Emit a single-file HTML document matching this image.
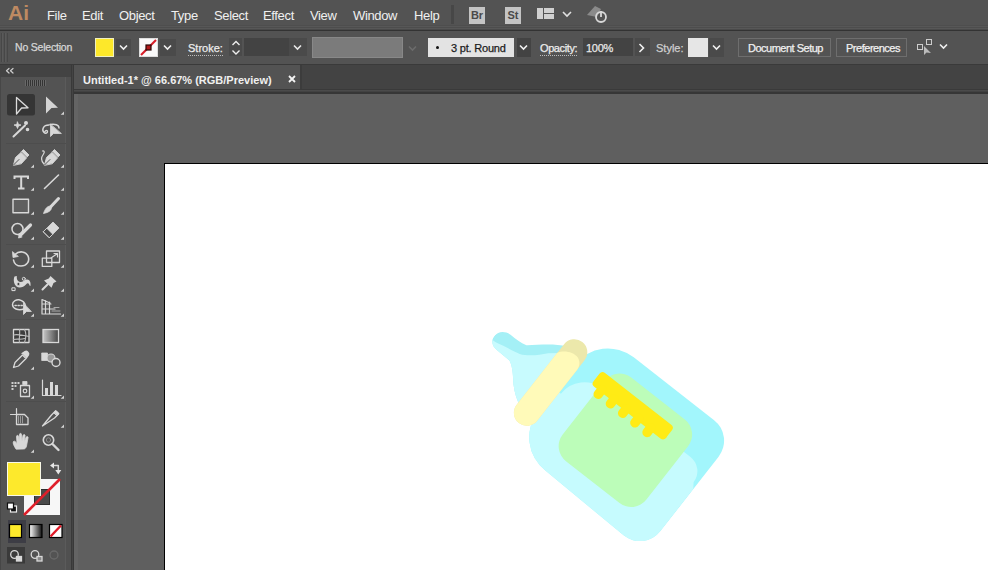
<!DOCTYPE html>
<html><head><meta charset="utf-8">
<style>
*{margin:0;padding:0;box-sizing:border-box}
html,body{width:988px;height:570px;overflow:hidden;background:#5f5f5f;font-family:"Liberation Sans",sans-serif;position:relative}
.a{position:absolute}
#menubar{left:0;top:0;width:988px;height:25px;background:#535353}
#mband{left:0;top:25px;width:988px;height:5px;background:linear-gradient(#4e4e4e 0 1px,#575757 1px 2px,#4d4d4d 2px 3px,#575757 3px 4px,#4a4a4a 4px 5px)}
#mline{left:0;top:30px;width:988px;height:1px;background:#333}
#ctrl{left:0;top:31px;width:988px;height:33px;background:#535353}
#cline{left:0;top:64px;width:988px;height:1px;background:#3a3a3a}
.mi{position:absolute;top:9px;font-size:13px;color:#f0f0f0;line-height:13px;white-space:nowrap;letter-spacing:-0.35px}
.lbl{position:absolute;top:43px;font-size:11px;color:#ececec;-webkit-text-stroke:0.25px currentColor;line-height:11px;white-space:nowrap}
.ul{border-bottom:1px dotted #bdbdbd;padding-bottom:1px}
.box{position:absolute}
#tools{left:0;top:65px;width:71px;height:505px;background:#535353}
#tline{left:71px;top:65px;width:3px;height:505px;background:linear-gradient(90deg,#393939 0 1px,#444 1px 2px,#393939 2px 3px)}
#thead{left:0;top:65px;width:71px;height:12px;background:#434343}
#tabrow{left:74px;top:65px;width:914px;height:28px;background:#434343}
#tab{left:74px;top:65px;width:228px;height:24px;background:#535353;border-right:2px solid #3c3c3c}
#tabline{left:74px;top:89px;width:914px;height:5px;background:linear-gradient(#3a3a3a 0 1px,#4a4a4a 1px 2px,#424242 2px 3px,#363636 3px 5px)}
#canvas{left:74px;top:94px;width:914px;height:476px;background:#5f5f5f}
#artboard{left:165px;top:164px;width:823px;height:406px;background:#fff}
#abshadow{left:164px;top:163px;width:824px;height:407px;background:#000}
svg{position:absolute;overflow:visible}
</style></head><body>
<div class="a" id="menubar">
  <div class="a" style="left:8px;top:2px;font-size:21px;line-height:21px;color:#be8a62;font-weight:bold">Ai</div>
  <span class="mi" style="left:47px">File</span>
  <span class="mi" style="left:82px">Edit</span>
  <span class="mi" style="left:119px">Object</span>
  <span class="mi" style="left:171px">Type</span>
  <span class="mi" style="left:214px">Select</span>
  <span class="mi" style="left:263px">Effect</span>
  <span class="mi" style="left:310px">View</span>
  <span class="mi" style="left:353px">Window</span>
  <span class="mi" style="left:414px">Help</span>
  <div class="box" style="left:451px;top:5px;width:3px;height:19px;background:#474747"></div>
  <div class="box" style="left:469px;top:7px;width:16px;height:17px;background:#c4c4c4;color:#4a4a4a;font-size:11px;font-weight:bold;line-height:17px;text-align:center">Br</div>
  <div class="box" style="left:505px;top:7px;width:16px;height:17px;background:#c4c4c4;color:#4a4a4a;font-size:11px;font-weight:bold;line-height:17px;text-align:center">St</div>
  <div class="box" style="left:537px;top:8px;width:6px;height:11px;background:#d0d0d0"></div>
  <div class="box" style="left:544px;top:8px;width:10px;height:5px;background:#d0d0d0"></div>
  <div class="box" style="left:544px;top:14px;width:10px;height:5px;background:#d0d0d0"></div>
  <svg style="left:562px;top:11px" width="10" height="6"><path d="M1 1 L5 5 L9 1" stroke="#e0e0e0" stroke-width="1.6" fill="none"/></svg>
  <svg style="left:585px;top:3px" width="25" height="22"><path d="M2 12 L10 3 L16 6 L12 14 Z" fill="#8a8a8a"/><circle cx="16" cy="14" r="5" stroke="#d8d8d8" stroke-width="1.8" fill="none"/><path d="M16 8 V14" stroke="#d8d8d8" stroke-width="1.8"/></svg>
</div>
<div class="a" id="mband"></div>
<div class="a" id="mline"></div>
<div class="a" id="ctrl">
</div>
<div class="a" id="cline"></div>
<!-- control bar content -->
<div class="box" style="left:1px;top:33px;width:7px;height:29px;background:repeating-linear-gradient(90deg,#474747 0 1px,#5a5a5a 1px 2px,#535353 2px 3px)"></div>
<span class="lbl" style="left:15px;top:42px;font-size:10.5px;letter-spacing:-0.2px;color:#d6d6d6">No Selection</span>
<div class="box" style="left:95px;top:38px;width:19px;height:19px;background:#fde82a;border:1px solid #f0f0c0"></div>
<div class="box" style="left:116px;top:39px;width:15px;height:17px;background:#4a4a4a"></div>
<svg style="left:119px;top:44px" width="10" height="7"><path d="M1 1.5 L4.5 5 L8 1.5" stroke="#f0f0f0" stroke-width="1.6" fill="none"/></svg>
<div class="box" style="left:139px;top:38px;width:19px;height:19px;background:#fafafa;border:1px solid #ddd"></div>
<svg style="left:139px;top:38px" width="19" height="19"><path d="M2 17 L17 2" stroke="#d81f2a" stroke-width="2.2"/><rect x="7" y="7" width="5" height="5" fill="#b01818" stroke="#2a0606" stroke-width="1.2"/></svg>
<div class="box" style="left:160px;top:39px;width:16px;height:17px;background:#4a4a4a"></div>
<svg style="left:163px;top:44px" width="10" height="7"><path d="M1 1.5 L4.5 5 L8 1.5" stroke="#f0f0f0" stroke-width="1.6" fill="none"/></svg>
<span class="lbl ul" style="left:188px">Stroke:</span>
<div class="box" style="left:229px;top:38px;width:13px;height:18px;background:#4a4a4a"></div>
<svg style="left:231px;top:40px" width="10" height="16"><path d="M1.5 5 L5 1.5 L8.5 5 M1.5 10.5 L5 14 L8.5 10.5" stroke="#eee" stroke-width="1.4" fill="none"/></svg>
<div class="box" style="left:244px;top:38px;width:45px;height:18px;background:#434343"></div>
<div class="box" style="left:289px;top:38px;width:18px;height:18px;background:#4a4a4a"></div>
<svg style="left:293px;top:44px" width="10" height="7"><path d="M1 1.5 L4.5 5 L8 1.5" stroke="#e8e8e8" stroke-width="1.6" fill="none"/></svg>
<div class="box" style="left:312px;top:37px;width:91px;height:21px;background:#7b7b7b;border:1px solid #888"></div>
<svg style="left:408px;top:45px" width="10" height="7"><path d="M1 1.5 L4.5 5 L8 1.5" stroke="#6c6c6c" stroke-width="1.6" fill="none"/></svg>
<div class="box" style="left:428px;top:38px;width:86px;height:19px;background:#e3e3e3"></div>
<div class="box" style="left:436px;top:46px;width:3px;height:3px;background:#111;border-radius:50%"></div>
<span class="lbl" style="left:451px;color:#1c1c1c;letter-spacing:-0.2px">3 pt. Round</span>
<div class="box" style="left:517px;top:38px;width:14px;height:19px;background:#434343"></div>
<svg style="left:519px;top:44px" width="10" height="7"><path d="M1 1.5 L4.5 5 L8 1.5" stroke="#f0f0f0" stroke-width="1.6" fill="none"/></svg>
<span class="lbl ul" style="left:540px;letter-spacing:-0.4px">Opacity:</span>
<div class="box" style="left:583px;top:38px;width:50px;height:18px;background:#434343"></div>
<span class="lbl" style="left:586px;color:#e8e8e8;letter-spacing:-0.3px">100%</span>
<div class="box" style="left:635px;top:38px;width:15px;height:18px;background:#4a4a4a"></div>
<svg style="left:638px;top:43px" width="8" height="10"><path d="M1.5 1 L5.5 5 L1.5 9" stroke="#f0f0f0" stroke-width="1.6" fill="none"/></svg>
<span class="lbl" style="left:656px;color:#cfcfcf">Style:</span>
<div class="box" style="left:688px;top:38px;width:20px;height:19px;background:#e6e6e6"></div>
<div class="box" style="left:709px;top:38px;width:15px;height:19px;background:#4a4a4a"></div>
<svg style="left:712px;top:44px" width="10" height="7"><path d="M1 1.5 L4.5 5 L8 1.5" stroke="#f0f0f0" stroke-width="1.6" fill="none"/></svg>
<div class="box" style="left:738px;top:38px;width:93px;height:19px;border:1px solid #6e6e6e;background:#535353"></div>
<span class="lbl" style="left:748px;color:#f0f0f0;letter-spacing:-0.5px">Document Setup</span>
<div class="box" style="left:836px;top:38px;width:71px;height:19px;border:1px solid #6e6e6e;background:#535353"></div>
<span class="lbl" style="left:846px;color:#f0f0f0;letter-spacing:-0.48px">Preferences</span>
<svg style="left:916px;top:38px" width="18" height="18"><rect x="1.5" y="6.5" width="5" height="5" stroke="#ccc" fill="none"/><rect x="10.5" y="1.5" width="5" height="5" stroke="#ccc" fill="none"/><path d="M8 8 L8 17 L10.5 14.5 L15 15 Z" fill="#bbb"/></svg>
<svg style="left:939px;top:43px" width="10" height="7"><path d="M1 1.5 L4.5 5 L8 1.5" stroke="#f0f0f0" stroke-width="1.6" fill="none"/></svg>

<div class="a" id="tools"></div>
<div class="a" id="thead"></div>
<div class="a" style="left:65px;top:77px;width:1px;height:493px;background:#5b5b5b"></div>
<div class="a" style="left:66px;top:77px;width:5px;height:493px;background:#505050"></div>
<div class="a" style="left:0;top:77px;width:1px;height:493px;background:#474747"></div>
<div class="a" id="tline"></div>
<div class="a" style="left:0;top:0;width:74px;height:570px">
<svg style="left:0;top:0" width="74" height="570" viewBox="0 0 74 570">
<g fill="none" stroke="#d8d8d8" stroke-width="1.3" stroke-linejoin="round" stroke-linecap="round">
<!-- header arrows -->
<path d="M9 68.5 L6.5 70.8 L9 73 M13 68.5 L10.5 70.8 L13 73" stroke="#cfcfcf" stroke-width="1.2"/>
</g>
<!-- gripper -->
<g stroke="#343434" stroke-width="1">
<path d="M26.5 80 V86 M28.5 80 V86 M30.5 80 V86 M32.5 80 V86 M34.5 80 V86 M36.5 80 V86 M38.5 80 V86 M40.5 80 V86 M42.5 80 V86 M44.5 80 V86"/>
</g>
<g stroke="#686868" stroke-width="1">
<path d="M25.5 80 V86 M27.5 80 V86 M29.5 80 V86 M31.5 80 V86 M33.5 80 V86 M35.5 80 V86 M37.5 80 V86 M39.5 80 V86 M41.5 80 V86 M43.5 80 V86 M45.5 80 V86"/>
</g>
<rect x="7" y="94" width="28" height="21.5" rx="2.5" fill="#353535"/>
<g fill="none" stroke="#dcdcdc" stroke-width="1.3" stroke-linejoin="round" stroke-linecap="round">
<!-- selection -->
<path d="M16.5 97.5 L28 107.8 L21.6 108 L16.5 114 Z" fill="#353535"/>
</g>
<g fill="#d4d4d4">
<path d="M46 96.5 L58 107.8 L51.5 108 L46 113.5 Z"/>
<!-- small triangles -->
<path d="M64 111.5 L64 114.8 L60.7 114.8 Z"/>
<path d="M34 164.5 L34 167.8 L30.7 167.8 Z"/>
<path d="M64 164.5 L64 167.8 L60.7 167.8 Z"/>
<path d="M34 187.5 L34 190.8 L30.7 190.8 Z"/>
<path d="M64 187.5 L64 190.8 L60.7 190.8 Z"/>
<path d="M34 211.5 L34 214.8 L30.7 214.8 Z"/>
<path d="M64 211.5 L64 214.8 L60.7 214.8 Z"/>
<path d="M34 236.5 L34 239.8 L30.7 239.8 Z"/>
<path d="M64 236.5 L64 239.8 L60.7 239.8 Z"/>
<path d="M34 264.5 L34 267.8 L30.7 267.8 Z"/>
<path d="M64 264.5 L64 267.8 L60.7 267.8 Z"/>
<path d="M34 288.5 L34 291.8 L30.7 291.8 Z"/>
<path d="M64 288.5 L64 291.8 L60.7 291.8 Z"/>
<path d="M34 313.5 L34 316.8 L30.7 316.8 Z"/>
<path d="M64 313.5 L64 316.8 L60.7 316.8 Z"/>
<path d="M34 366.5 L34 369.8 L30.7 369.8 Z"/>
<path d="M34 395.5 L34 398.8 L30.7 398.8 Z"/>
<path d="M64 395.5 L64 398.8 L60.7 398.8 Z"/>
<path d="M64 424.5 L64 427.8 L60.7 427.8 Z"/>
<path d="M34 449.5 L34 452.8 L30.7 452.8 Z"/>
</g>
<g fill="none" stroke="#d8d8d8" stroke-width="1.4" stroke-linejoin="round" stroke-linecap="round">
<!-- magic wand -->
<path d="M13.5 136.5 L25 125.5" stroke-width="2"/>
<path d="M17.5 122 L18.5 124.5 L21 125 L18.5 126 L17.5 128.5 L16.5 126 L14 125 L16.5 124.5 Z" fill="#d8d8d8" stroke-width="0.8"/>
<circle cx="26" cy="123" r="1.3" fill="#d8d8d8"/>
<circle cx="27.5" cy="129.5" r="1.1" fill="#d8d8d8"/>
<!-- lasso -->
<path d="M49 125 C43 125 41.5 130 44 132.5 C45.5 134 47.5 133 47.5 131.5 C47.5 130 45.5 130 45 131.5" />
<path d="M50 124.5 C55 123.5 59 125 59 128"/>
<path d="M50.5 124.5 L50.5 136.5 L53.5 133.5 L61 133.5 Z" fill="#d8d8d8" stroke-width="0.8"/>
<!-- pen -->
<path d="M13.5 165 L15.5 157.5 L21 152.5 L26.5 158 L21.5 163.5 Z" fill="#d8d8d8" stroke-width="0.9"/>
<path d="M21.5 151.5 L23.5 149.5 L29 155 L27 157 Z" fill="#d8d8d8" stroke-width="0.9"/>
<path d="M13.5 165 L19 159.5" stroke="#555" stroke-width="1"/>
<!-- curvature pen -->
<path d="M44 164 C40 160 42 156 43.5 154 C45 152 44 150.5 42.5 151" stroke-width="1.2"/>
<path d="M44.5 165 L46.5 157.5 L52 152.5 L57.5 158 L52.5 163.5 Z" fill="#d8d8d8" stroke-width="0.9"/>
<path d="M52.5 151.5 L54.5 149.5 L60 155 L58 157 Z" fill="#d8d8d8" stroke-width="0.9"/>
<path d="M44.5 165 L50 159.5" stroke="#555" stroke-width="1"/>
<!-- type -->
<path d="M14.5 179 V176.5 H28 V179 M21.2 176.5 V188.5 M18 188.5 H24.5" stroke-width="2" stroke-linecap="butt" stroke-linejoin="miter"/>
<!-- line -->
<path d="M44.5 188.5 L58.5 175" stroke-width="1.6"/>
<!-- rect -->
<rect x="13" y="199.3" width="15.5" height="13.4" fill="#5f5f5f" stroke-width="1.4"/>
<!-- brush -->
<path d="M58.5 198.5 L51 206.5" stroke-width="3"/>
<path d="M50.5 206 C47 206 45 209 43.5 213.5 C48 212.5 51.5 211 51.5 207.5 Z" fill="#d8d8d8" stroke-width="0.8"/>
<!-- shaper -->
<circle cx="17.5" cy="229" r="5.5" stroke-width="1.5"/>
<path d="M30.5 225 L20 235.5" stroke-width="3.2"/>
<path d="M19.5 234 L18.5 238 L22 237" fill="#d8d8d8" stroke-width="0.8"/>
<!-- eraser -->
<path d="M43.5 231.5 L53 222 L59 228 L49.5 237.5 Z" fill="#d8d8d8" stroke-width="0.8"/>
<path d="M43.5 231.5 L46.8 228.2 L52.8 234.2 L49.5 237.5 Z" fill="#4a4a4a" stroke="#d8d8d8" stroke-width="0.9"/>
<!-- rotate -->
<path d="M15 254.5 C19 250.5 26 251 28.2 256.5 C30 261.5 26.5 266 21 266 C17 266 14 263.5 13.5 260" stroke-width="1.6"/>
<path d="M12.5 252 L13 257.5 L18 256.5 Z" fill="#d8d8d8" stroke-width="0.8"/>
<!-- scale -->
<rect x="46.5" y="251" width="13" height="11.5" stroke-width="1.3"/>
<rect x="42.3" y="258.2" width="9.5" height="8.2" stroke-width="1.3"/>
<path d="M51 258 L57.5 253.5 M54 253.5 H57.5 V257" stroke-width="1.2"/>
<!-- width / warp -->
<path d="M14.5 276.5 C13 280 14 284 16.5 286.5 C19 288.5 23.5 287.5 26 284.5 C27.5 282.5 29 283 29.5 285.5 L30.5 286 C31 282 29.5 279 26.5 279.5 C24 280 22.5 282.5 20 282 C17.5 281.5 16.5 279 16.8 276 Z" fill="#d8d8d8" stroke="none"/>
<circle cx="18.5" cy="284" r="1.6" fill="#444" stroke="#d8d8d8" stroke-width="0.8"/>
<circle cx="23.8" cy="278.8" r="1.5" fill="#535353" stroke="#d8d8d8" stroke-width="1"/>
<rect x="12.3" y="287.8" width="2.8" height="2.8" fill="#535353" stroke="#e0e0e0" stroke-width="1"/>
<!-- puppet pin -->
<path d="M50.5 276 L56.5 281.5 L53.5 283 L51.5 287.8 L44 280.5 L48.8 278.5 Z" fill="#d8d8d8" stroke="none"/>
<path d="M47.5 284.5 L42.5 289.5" stroke-width="2"/>
<!-- shape builder -->
<path d="M24 309 C18 311 12.5 308.5 12.5 304.5 C12.5 300.5 17 299.5 19 299.8 C22.5 300.5 25 303 25.5 306" stroke-width="1.4"/>
<path d="M15 305.5 H24" stroke-dasharray="1.3 1.7" stroke-width="1.4"/>
<path d="M23.5 303.5 L23.5 314.5 L26.5 311.5 L31 311.5 Z" fill="#d8d8d8" stroke-width="0.8"/>
<!-- perspective grid -->
<path d="M42 299.5 V314 H60.5 M42 299.5 L50 303 M42 304 H51 M42 309 H55 M45.5 300.5 V314 M49.5 302 V314" stroke-width="1.2"/>
<path d="M52 311 H60 M54 307.5 H59" stroke-width="1" stroke="#aaa"/>
<!-- mesh -->
<rect x="13.5" y="329.5" width="15.5" height="13" fill="#3d3d3d" stroke-width="1.3"/>
<path d="M19.5 329.5 C20.5 334 18.5 338 19.5 342.5 M24.5 329.5 C26.5 333 26 338 24.5 342.5 M13.5 335 C18 333.5 24 336 29 336.5 M13.5 339.5 C17 338.5 21 340 24.5 338.5" stroke-width="1.1" stroke="#bdbdbd"/>
</g>
<defs><linearGradient id="gr" x1="0" x2="1"><stop offset="0" stop-color="#c8c8c8"/><stop offset="1" stop-color="#454545"/></linearGradient>
<linearGradient id="gr2" x1="0" x2="1"><stop offset="0" stop-color="#ffffff"/><stop offset="1" stop-color="#111"/></linearGradient></defs>
<rect x="43" y="329.5" width="15.5" height="13" fill="url(#gr)" stroke="#d8d8d8" stroke-width="1.3"/>
<g fill="none" stroke="#d8d8d8" stroke-width="1.4" stroke-linejoin="round" stroke-linecap="round">
<!-- eyedropper -->
<path d="M13.5 367.5 L15 362.5 L22.5 355 L26 358.5 L18.5 366 Z" stroke-width="1.3"/>
<path d="M22 353.5 L25 351.5 C27 350.5 29.5 353 28.5 355 L26.5 358" fill="#d8d8d8" stroke-width="1.3"/>
<!-- blend -->
<rect x="42" y="353" width="5.5" height="7.5" fill="#d8d8d8" stroke-width="0.8"/>
<circle cx="51" cy="358" r="4" fill="#9a9a9a" stroke-width="1.1"/>
<circle cx="56" cy="362.5" r="4" fill="#535353" stroke-width="1.4"/>
<!-- symbol sprayer -->
<g fill="#cfcfcf" stroke="none">
<rect x="11.5" y="382" width="2" height="2"/><rect x="14.5" y="382" width="2" height="2"/><rect x="17.5" y="382" width="2" height="2"/>
<rect x="11.5" y="385" width="2" height="2"/><rect x="14.5" y="385" width="2" height="2"/>
<rect x="11.5" y="388" width="2" height="2"/>
</g>
<rect x="20.5" y="385.5" width="9" height="11" stroke-width="1.3"/>
<rect x="23" y="381.5" width="4" height="3" fill="#d8d8d8" stroke-width="0.8"/>
<circle cx="25" cy="391" r="1.8" stroke-width="1.2"/>
<!-- column graph -->
<path d="M42.5 380 V395.5 H61" stroke-width="1.2"/>
<rect x="45" y="388" width="3" height="7" fill="#d8d8d8" stroke="none"/>
<rect x="50" y="382" width="3" height="13" fill="#d8d8d8" stroke="none"/>
<rect x="55" y="385" width="3" height="10" fill="#d8d8d8" stroke="none"/>
<!-- artboard -->
<path d="M10.5 414.5 H16.5 V408.5" stroke-width="1.2"/>
<path d="M16.5 414.5 H24.5 L28 418 V424.5 H16.5 Z" stroke-width="1.3"/>
<path d="M18.5 416.5 V423 M20.5 416.5 V423 M22.5 416.5 V423" stroke="#9a9a9a" stroke-width="1"/>
<!-- knife/slice -->
<path d="M42.5 426 L51.5 415 L55.5 411 L58.5 414 L54.5 418 Z" stroke-width="1.3"/>
<path d="M54 412.5 L56 410.5 L59 413.5 L57 415.5 Z" fill="#d8d8d8" stroke-width="1"/>
<!-- hand -->
<path d="M16 449 C14 446 12.5 443 13.5 441.5 C14.5 440.5 16 442 17 443.5 L16.5 436.5 C16.5 435 18.5 435 18.5 436.5 L19 441 L19.5 434.5 C19.5 433 21.5 433 21.5 434.5 L22 441 L23 435.5 C23.5 434 25.5 434.5 25 436 L24.5 441.5 L26 437.5 C26.5 436 28.5 436.5 28 438 L26.5 446 C26 448 25 449 24 449 Z" fill="#d8d8d8" stroke-width="0.8"/>
<!-- zoom -->
<circle cx="48.5" cy="440" r="5.2" stroke-width="1.6"/>
<path d="M52.5 444 L58.5 450" stroke-width="2.4"/>
<circle cx="48.5" cy="440" r="2.2" stroke="#888" stroke-width="1"/>
<!-- swap arrows -->
<path d="M53 465.5 H58.3 V470" stroke-width="1.5" stroke-linecap="butt"/>
<path d="M50 465.5 L54 462.5 L54 468.5 Z M55.3 470 L61.3 470 L58.3 474.5 Z" fill="#e6e6e6" stroke="none"/>
</g>
<!-- stroke swatch -->
<rect x="24" y="479" width="36" height="36" fill="#f7f7f7"/>
<rect x="34.5" y="489.5" width="15" height="15" fill="#4a4a4a" stroke="#2e2e2e" stroke-width="1"/>
<path d="M24 515 L60 479" stroke="#df1f2a" stroke-width="2.6"/>
<!-- fill swatch -->
<rect x="7" y="462" width="34" height="34" fill="#f9f9e8"/>
<rect x="8" y="463" width="32" height="32" fill="#fde92c"/>

<!-- default colors -->
<rect x="10.5" y="506" width="6" height="6" fill="#111" stroke="#eee" stroke-width="1.2"/>
<rect x="7.5" y="503" width="6" height="6" fill="#fff" stroke="#111" stroke-width="1.2"/>
<!-- color mode row -->
<rect x="8" y="520" width="18" height="23" fill="#3d3d45"/>
<rect x="9.5" y="524.5" width="12" height="13" fill="#fde92c" stroke="#000" stroke-width="1.2"/>
<rect x="29.5" y="524.5" width="12.5" height="13" fill="url(#gr2)" stroke="#000" stroke-width="1.2"/>
<rect x="49.5" y="524.5" width="12.5" height="13" fill="#fff" stroke="#000" stroke-width="1.2"/>
<path d="M50.5 536.5 L61 525.5" stroke="#e01a28" stroke-width="2.4"/>
<!-- draw modes -->
<rect x="7" y="547" width="18" height="16.5" fill="#3a3a3a"/>
<g fill="none" stroke="#d8d8d8" stroke-width="1.3">
<circle cx="14.5" cy="554.5" r="3.8"/>
<rect x="16.5" y="556.5" width="5" height="4.5" fill="#d8d8d8"/>
<circle cx="35" cy="554.5" r="3.8"/>
<rect x="37" y="556.5" width="5" height="4.5" fill="#888"/>
<circle cx="54" cy="555" r="4" stroke="#6a6a6a"/>
</g>
<!-- separators -->
<g stroke="#4d4d4d" stroke-width="1">
<path d="M6 143.5 H66 M6 244.5 H66 M6 319.5 H66 M6 401.5 H66"/>
</g>
</svg>
</div>
<div class="a" id="tabrow"></div>
<div class="a" id="tab"></div>
<div class="a" id="tabline"></div>
<span class="a" style="left:83px;top:75px;font-size:11px;line-height:11px;color:#f0f0f0;font-weight:bold;white-space:nowrap">Untitled-1* @ 66.67% (RGB/Preview)</span>
<svg style="left:288px;top:75px" width="8" height="8"><path d="M1 1 L7 7 M7 1 L1 7" stroke="#f4f4f4" stroke-width="1.8"/></svg>
<div class="a" id="canvas"></div>
<div class="a" style="left:74px;top:94px;width:4px;height:476px;background:#646464"></div>
<div class="a" id="abshadow"></div>
<div class="a" id="artboard"></div>

<svg style="left:0;top:0" width="988" height="570" viewBox="0 0 988 570">
<defs>
<clipPath id="bodyclip"><path d="M-44 -70.5 H58 A26 26 0 0 1 84 -44.5 V50 A26 26 0 0 1 58 76 L-44 73 A42 42 0 0 1 -86 31 V-28.5 A42 42 0 0 1 -44 -70.5 Z"/></clipPath>
<clipPath id="nipclip"><path d="M-103 -38 C-117 -32 -128 -20 -136 -14 C-142 -12 -148 -12.5 -155 -12.5 C-162 -12.5 -167 -7.5 -167 -2 C-167 4 -163 8 -156 8 L-140 8.5 C-134 11 -128 18 -122 25 C-116 31 -110 35 -103 38 Z"/></clipPath>
</defs>
<g transform="translate(625 440) rotate(38)">
<!-- nipple -->
<g clip-path="url(#nipclip)">
<rect x="-170" y="-45" width="70" height="90" fill="#a4f0f6"/>
<path d="M-170 3 L-161.5 2.5 C-152 0 -142 -1 -136 -3 C-128 -6 -120 -14 -114 -21 L-103 -30 L-100 45 L-170 45 Z" fill="#c8fbfe"/>
</g>
<!-- body -->
<path d="M-44 -70.5 H58 A26 26 0 0 1 84 -44.5 V50 A26 26 0 0 1 58 76 L-44 73 A42 42 0 0 1 -86 31 V-28.5 A42 42 0 0 1 -44 -70.5 Z" fill="#a2f6fc"/>
<g clip-path="url(#bodyclip)">
<path d="M-49 -27 H62 A18 18 0 0 1 80 -9 L90 5 V95 H-100 V3 H-79 A30 30 0 0 1 -49 -27 Z" fill="#c6fbfe"/>
</g>
<!-- label -->
<rect x="-52.5" y="-53" width="106" height="106" rx="19" fill="#bcfdb9"/>
<!-- comb -->
<g fill="#ffeb15">
<rect x="-61" y="-40.5" width="92" height="17.5" rx="4"/>
<rect x="-54" y="-30" width="9.5" height="15" rx="4.5"/>
<rect x="-38.5" y="-30" width="9.5" height="15" rx="4.5"/>
<rect x="-23" y="-30" width="9.5" height="15" rx="4.5"/>
<rect x="-7.5" y="-30" width="9.5" height="15" rx="4.5"/>
<rect x="8" y="-30" width="9.5" height="15" rx="4.5"/>
<rect x="22" y="-30" width="9" height="5" rx="3"/>
</g>
<!-- collar -->
<rect x="-107" y="-51" width="26" height="103" rx="13" fill="#ece8ab"/>
<path d="M-107 -27 C-104 -33 -95 -38 -88 -36 C-83 -34 -81 -30 -81 -26 V39 A13 13 0 0 1 -107 39 Z" fill="#fffab9"/>
</g>
</svg>

</body></html>
